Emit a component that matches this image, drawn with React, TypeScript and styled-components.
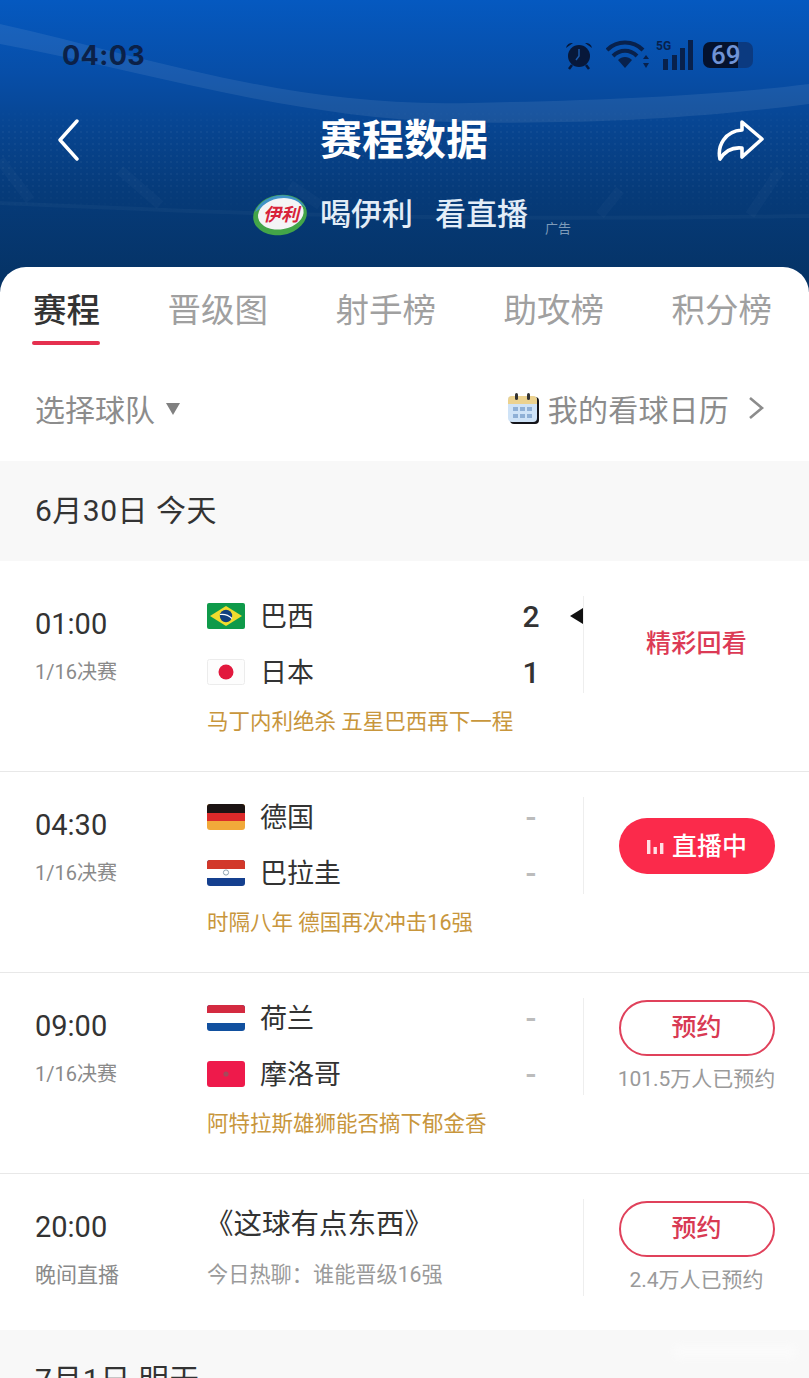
import styled, { createGlobalStyle } from 'styled-components';

const GlobalStyle = createGlobalStyle`
  html, body {
    margin: 0;
    padding: 0;
    background: #fff;
  }
  body {
    font-family: Roboto, "Noto Sans CJK SC", sans-serif;
    color: #333;
  }
`;

const Page = styled.div`
  width: 809px;
  height: 1378px;
  overflow: hidden;
  position: relative;
  background: #fff;
`;

const Header = styled.header`
  position: relative;
  height: 292px;
  box-sizing: border-box;
  padding-top: 35px;
  overflow: hidden;
  background: linear-gradient(180deg, #0559c0 0%, #074ea8 25%, #07448f 45%, #063b7a 65%, #053263 100%);
`;

const Backdrop = styled.svg`
  position: absolute;
  inset: 0;
  width: 809px;
  height: 292px;
`;

const CrowdDots = styled.div`
  position: absolute;
  left: 0;
  right: 0;
  top: 105px;
  height: 110px;
  background-image: radial-gradient(rgba(255, 255, 255, 0.04) 1px, transparent 1.6px);
  background-size: 6px 6px;
  mask-image: linear-gradient(180deg, transparent, #000 25%, #000 70%, transparent);
`;

const StatusBar = styled.div`
  position: relative;
  height: 40px;
  display: flex;
  align-items: center;
  padding: 0 56px 0 62px;
`;

const Clock = styled.span`
  font-family: Inter, Roboto, sans-serif;
  font-size: 27px;
  font-weight: 700;
  letter-spacing: 0.4px;
  color: #0b2148;
  margin-right: auto;
`;

const StatusIcons = styled.div`
  display: flex;
  align-items: center;
  gap: 6px;
`;

const Battery = styled.div`
  width: 50px;
  height: 26px;
  border-radius: 7px;
  background: linear-gradient(90deg, #04122e 0 70%, #0b3a80 70% 100%);
  color: #6f93d6;
  font-family: Roboto, sans-serif;
  font-size: 26px;
  font-weight: 500;
  line-height: 26px;
  padding-left: 8px;
  box-sizing: border-box;
`;

const NavBar = styled.div`
  position: relative;
  margin-top: 30px;
  height: 70px;
  display: flex;
  align-items: center;
  justify-content: space-between;
  padding: 0 44px 0 56px;
`;

const PageTitle = styled.h1`
  margin: 0 0 0 13px;
  padding-bottom: 8px;
  font-size: 42px;
  font-weight: 700;
  color: #fff;
`;

const AdRow = styled.div`
  position: relative;
  margin-top: 10px;
  display: flex;
  align-items: center;
  padding-left: 252px;
  height: 60px;
`;

const AdText = styled.span<{ $gap: number }>`
  margin-left: ${(p) => p.$gap}px;
  padding-bottom: 7px;
  font-size: 31px;
  font-weight: 500;
  color: #e3edf7;
`;

const AdTag = styled.span`
  font-size: 13px;
  color: #7e9bb9;
  margin: 24px 0 0 17px;
`;

const Card = styled.main`
  position: relative;
  margin-top: -25px;
  background: #fff;
  border-radius: 26px 26px 0 0;
`;

const Tabs = styled.nav`
  display: flex;
  gap: 67.5px;
  padding: 21px 0 0 33px;
  height: 78px;
  box-sizing: border-box;
  white-space: nowrap;
`;

const Tab = styled.div<{ $active?: boolean }>`
  position: relative;
  font-size: 33.5px;
  line-height: 46px;
  height: 46px;
  font-weight: ${(p) => (p.$active ? 500 : 400)};
  color: ${(p) => (p.$active ? '#333' : '#a0a0a0')};

  &::after {
    content: '';
    display: ${(p) => (p.$active ? 'block' : 'none')};
    position: absolute;
    left: -1px;
    right: 0;
    top: 53px;
    height: 4px;
    border-radius: 2px;
    background: #e5304f;
  }
`;

const FilterBar = styled.div`
  height: 116px;
  display: flex;
  align-items: center;
  justify-content: space-between;
  padding: 0 45px 0 35px;
  font-size: 30px;
  color: #8c8c8c;
`;

const FilterGroup = styled.div`
  display: flex;
  align-items: center;
  margin-top: 9px;
`;

const DownArrow = styled.i`
  width: 0;
  height: 0;
  margin: 3px 0 0 11px;
  border-left: 7px solid transparent;
  border-right: 7px solid transparent;
  border-top: 12px solid #808080;
`;

const CalendarLabel = styled.span`
  margin: 0 19px 0 9px;
  letter-spacing: 0.2px;
`;

const DateBar = styled.div`
  height: 100px;
  box-sizing: border-box;
  padding: 0 0 6px 35px;
  display: flex;
  align-items: center;
  background: #f8f8f8;
  font-size: 30px;
  letter-spacing: 0.5px;
  color: #333;
  white-space: pre;
`;

const Row = styled.section<{ $top: number; $bottom: number; $last?: boolean }>`
  display: grid;
  grid-template-columns: 172px 376px 1fr;
  padding: ${(p) => p.$top}px 0 ${(p) => p.$bottom}px 35px;
  border-bottom: ${(p) => (p.$last ? 'none' : '1px solid #e8e8e8')};
`;

const TimeCol = styled.div`
  padding-top: 16px;
`;

const Time = styled.div`
  font-size: 29px;
  line-height: 40px;
  color: #333;
`;

const Stage = styled.div`
  margin-top: 14px;
  font-size: 20px;
  line-height: 28px;
  color: #8a8a8a;
`;

const ShowStage = styled(Stage)`
  font-size: 21px;
`;

const TeamRow = styled.div`
  display: grid;
  grid-template-columns: 38px 266px 40px 32px;
  align-items: center;
  height: 56px;
`;

const TeamName = styled.span`
  padding: 0 0 4px 15px;
  font-size: 27px;
  color: #333;
`;

const Score = styled.span<{ $empty?: boolean }>`
  text-align: center;
  font-size: ${(p) => (p.$empty ? '32px' : '30px')};
  font-weight: 500;
  color: ${(p) => (p.$empty ? '#bcbcbc' : '#333')};
`;

const WinMark = styled.i`
  justify-self: end;
  width: 0;
  height: 0;
  border-top: 8px solid transparent;
  border-bottom: 8px solid transparent;
  border-right: 13px solid #111;
`;

const Headline = styled.div`
  margin-top: 8px;
  font-size: 21.5px;
  line-height: 28px;
  color: #c8963c;
`;

const ShowTitle = styled.div`
  height: 68px;
  line-height: 68px;
  font-size: 28.5px;
  margin-left: -2px;
  color: #333;
`;

const ShowNote = styled.div`
  margin-top: 2px;
  font-size: 21.2px;
  line-height: 28px;
  color: #9a9a9a;
`;

const ActionCol = styled.div`
  margin-top: 8px;
  height: 97px;
  border-left: 1px solid #eeeeee;
  display: flex;
  flex-direction: column;
  align-items: center;
  justify-content: center;
`;

const ReplayLink = styled.span`
  font-size: 25px;
  font-weight: 500;
  letter-spacing: 0.3px;
  color: #dc3a55;
  padding-bottom: 8px;
`;

const LiveButton = styled.div`
  width: 156px;
  height: 56px;
  border-radius: 28px;
  background: #fb2a4b;
  color: #fff;
  display: flex;
  align-items: center;
  justify-content: center;
  gap: 8px;
  font-size: 25px;
  font-weight: 500;
`;

const LiveLabel = styled.span`
  padding-bottom: 4px;
`;

const BookButton = styled.div`
  width: 156px;
  height: 56px;
  box-sizing: border-box;
  border: 2px solid #e0415b;
  border-radius: 28px;
  padding-bottom: 7px;
  color: #d83a53;
  display: flex;
  align-items: center;
  justify-content: center;
  font-size: 25px;
  font-weight: 500;
`;

const BookCount = styled.div`
  margin-top: 9px;
  font-size: 21px;
  line-height: 28px;
  color: #9a9a9a;
  white-space: nowrap;
`;

const Watermark = styled.div`
  position: absolute;
  right: 14px;
  bottom: 20px;
  width: 120px;
  height: 12px;
  background: #fff;
  opacity: 0.45;
  filter: blur(4px);
`;

const flagShape = { width: 38, height: 26, viewBox: '0 0 38 26' };

const Flag = ({ code }: { code: string }) => {
  if (code === 'br') {
    return (
      <svg {...flagShape}>
        <rect width="38" height="26" rx="2" fill="#0f9a4a" />
        <path d="M19 3 L35 13 L19 23 L3 13 Z" fill="#f2dc2e" />
        <circle cx="19" cy="13" r="6.2" fill="#103f7e" />
        <path d="M13 11.5 C17 11 22 12.5 25 15.5" stroke="#fff" strokeWidth="1.2" fill="none" />
      </svg>
    );
  }
  if (code === 'jp') {
    return (
      <svg {...flagShape}>
        <rect x="0.5" y="0.5" width="37" height="25" rx="2" fill="#fdfdfd" stroke="#ececec" />
        <circle cx="19" cy="13" r="7.5" fill="#e2183d" />
      </svg>
    );
  }
  if (code === 'de') {
    return (
      <svg {...flagShape}>
        <rect width="38" height="26" rx="3" fill="#f1a93a" />
        <rect y="7" width="38" height="10" fill="#dc2a2a" />
        <path d="M3 0 H35 A3 3 0 0 1 38 3 V9 H0 V3 A3 3 0 0 1 3 0 Z" fill="#1c1414" />
      </svg>
    );
  }
  if (code === 'py') {
    return (
      <svg {...flagShape}>
        <rect width="38" height="26" rx="3" fill="#15408f" />
        <rect y="8" width="38" height="10" fill="#fff" />
        <path d="M3 0 H35 A3 3 0 0 1 38 3 V9 H0 V3 A3 3 0 0 1 3 0 Z" fill="#d2382a" />
        <circle cx="19" cy="12.5" r="2.6" fill="none" stroke="#8fa3b0" strokeWidth="1" />
      </svg>
    );
  }
  if (code === 'nl') {
    return (
      <svg {...flagShape}>
        <rect width="38" height="26" rx="3" fill="#11509f" />
        <rect y="8" width="38" height="10" fill="#fff" />
        <path d="M3 0 H35 A3 3 0 0 1 38 3 V8 H0 V3 A3 3 0 0 1 3 0 Z" fill="#d42a40" />
      </svg>
    );
  }
  return (
    <svg {...flagShape}>
      <rect width="38" height="26" rx="3" fill="#ee1a4b" />
      <circle cx="19" cy="13" r="2.6" fill="#a5485a" />
    </svg>
  );
};

const AlarmIcon = () => (
  <svg width="36" height="30" viewBox="0 0 36 30">
    <circle cx="15" cy="16" r="11" fill="#07183a" />
    <path d="M2 8 A6 6 0 0 1 9 3 Z M28 8 A6 6 0 0 0 21 3 Z" fill="#07183a" />
    <path d="M8 25 L5 29 M22 25 L25 29" stroke="#07183a" strokeWidth="2.5" />
    <path d="M15 9 V16 L12 20" stroke="#1b58a8" strokeWidth="1.5" fill="none" />
  </svg>
);

const WifiIcon = () => (
  <svg width="44" height="30" viewBox="0 0 44 30">
    <path d="M1 10 C11 0 27 0 37 10" stroke="#08214c" strokeWidth="4" fill="none" />
    <path d="M7 16 C14 9 24 9 31 16" stroke="#08214c" strokeWidth="4" fill="none" />
    <path d="M19 28 L12 20 C16 16 22 16 26 20 Z" fill="#08214c" />
    <path d="M40 15 L43 19 H37 Z M40 28 L37 23 H43 Z" fill="#08214c" />
  </svg>
);

const SignalIcon = () => (
  <svg width="41" height="32" viewBox="0 0 41 32">
    <text x="0" y="11" fontSize="12" fontWeight="700" fontFamily="Roboto, sans-serif" fill="#08214c">5G</text>
    <rect x="7" y="20" width="5" height="11" fill="#08214c" />
    <rect x="16" y="16" width="5" height="15" fill="#08214c" />
    <rect x="24" y="9" width="5" height="22" fill="#08214c" />
    <rect x="32" y="1" width="5" height="30" fill="#08214c" />
  </svg>
);

const YiliLogo = () => (
  <svg width="56" height="44" viewBox="0 0 56 44">
    <g transform="rotate(-10 28 22)">
      <ellipse cx="28" cy="22" rx="27" ry="20" fill="#43a548" />
      <path d="M4 15 C12 -1 46 -4 55 20 C47 8 20 6 4 15 Z" fill="#3f93c6" />
      <ellipse cx="29" cy="21" rx="23" ry="15.5" fill="#f4f4f6" />
    </g>
    <text x="29" y="28" textAnchor="middle" fontSize="18" fontStyle="italic" fontWeight="700" fontFamily='"Noto Sans CJK SC", sans-serif' fill="#d8233a">伊利</text>
  </svg>
);

const BackIcon = () => (
  <svg width="24" height="42" viewBox="0 0 24 42">
    <path d="M21 2 L4 21 L21 40" stroke="#fff" strokeWidth="3.4" fill="none" strokeLinecap="round" strokeLinejoin="round" />
  </svg>
);

const ShareIcon = () => (
  <svg width="50" height="44" viewBox="0 0 50 44">
    <path
      d="M27 4 L47 21 L27 39 V30 C18 29 10 33 5 41 C2 28 10 13 27 12 Z"
      stroke="#fff"
      strokeWidth="3.6"
      fill="none"
      strokeLinejoin="round"
    />
  </svg>
);

const CalendarIcon = () => (
  <svg width="32" height="32" viewBox="0 0 32 32">
    <rect x="3" y="5" width="29" height="27" rx="4" fill="#14141a" />
    <rect x="1" y="4" width="29" height="26" rx="4" fill="#cfe3f7" />
    <path d="M1 12 V8 A4 4 0 0 1 5 4 H26 A4 4 0 0 1 30 8 V12 Z" fill="#ecd28f" />
    <rect x="8" y="1" width="3" height="7" rx="1.5" fill="#333" />
    <rect x="20" y="1" width="3" height="7" rx="1.5" fill="#333" />
    {[6, 13, 20].map((x) =>
      [15, 22].map((y) => <rect key={`${x}-${y}`} x={x} y={y} width="5" height="4" fill="#8fb0d6" />),
    )}
  </svg>
);

const ChevronIcon = () => (
  <svg width="16" height="24" viewBox="0 0 16 24">
    <path d="M2 2 L14 12 L2 22" stroke="#8c8c8c" strokeWidth="2.6" fill="none" />
  </svg>
);

const LiveBars = () => (
  <svg width="18" height="18" viewBox="0 0 18 18">
    <rect x="1" y="3" width="3.4" height="14" fill="#fff" opacity="0.85" />
    <rect x="7.5" y="10" width="3.4" height="7" fill="#fff" opacity="0.85" />
    <rect x="14" y="6" width="3.4" height="11" fill="#fff" opacity="0.85" />
  </svg>
);

type Match = {
  time: string;
  stage: string;
  home: { flag: string; name: string; score: string };
  away: { flag: string; name: string; score: string };
  headline: string;
  state: 'replay' | 'live' | 'book';
  booked?: string;
};

const matches: Match[] = [
  {
    time: '01:00',
    stage: '1/16决赛',
    home: { flag: 'br', name: '巴西', score: '2' },
    away: { flag: 'jp', name: '日本', score: '1' },
    headline: '马丁内利绝杀 五星巴西再下一程',
    state: 'replay',
  },
  {
    time: '04:30',
    stage: '1/16决赛',
    home: { flag: 'de', name: '德国', score: '-' },
    away: { flag: 'py', name: '巴拉圭', score: '-' },
    headline: '时隔八年 德国再次冲击16强',
    state: 'live',
  },
  {
    time: '09:00',
    stage: '1/16决赛',
    home: { flag: 'nl', name: '荷兰', score: '-' },
    away: { flag: 'ma', name: '摩洛哥', score: '-' },
    headline: '阿特拉斯雄狮能否摘下郁金香',
    state: 'book',
    booked: '101.5万人已预约',
  },
];

const tabs = ['赛程', '晋级图', '射手榜', '助攻榜', '积分榜'];

function Action({ match }: { match: Match }) {
  if (match.state === 'replay') return <ReplayLink>精彩回看</ReplayLink>;
  if (match.state === 'live') {
    return (
      <LiveButton>
        <LiveBars />
        <LiveLabel>直播中</LiveLabel>
      </LiveButton>
    );
  }
  return (
    <>
      <BookButton>预约</BookButton>
      <BookCount>{match.booked}</BookCount>
    </>
  );
}

export default function App() {
  return (
    <Page>
      <GlobalStyle />
      <Header>
        <CrowdDots />
        <Backdrop viewBox="0 0 809 292">
          <path
            d="M0 24 C140 55 290 108 470 103 C610 100 720 95 809 84 L809 104 C700 118 590 125 450 122 C290 118 140 70 0 44 Z"
            fill="#ffffff"
            opacity="0.08"
          />
          <path d="M0 160 L30 200 M120 170 L160 205 M290 185 L320 205 M620 190 L600 215 M780 170 L750 215" stroke="#ffffff" strokeWidth="10" opacity="0.02" />
          <path d="M0 203 C200 212 400 222 809 216" stroke="#ffffff" strokeWidth="4" opacity="0.03" fill="none" />
        </Backdrop>
        <StatusBar>
          <Clock>04:03</Clock>
          <StatusIcons>
            <AlarmIcon />
            <WifiIcon />
            <SignalIcon />
            <Battery>69</Battery>
          </StatusIcons>
        </StatusBar>
        <NavBar>
          <BackIcon />
          <PageTitle>赛程数据</PageTitle>
          <ShareIcon />
        </NavBar>
        <AdRow>
          <YiliLogo />
          <AdText $gap={12}>喝伊利</AdText>
          <AdText $gap={22}>看直播</AdText>
          <AdTag>广告</AdTag>
        </AdRow>
      </Header>
      <Card>
        <Tabs>
          {tabs.map((tab, i) => (
            <Tab key={tab} $active={i === 0}>
              {tab}
            </Tab>
          ))}
        </Tabs>
        <FilterBar>
          <FilterGroup>
            选择球队
            <DownArrow />
          </FilterGroup>
          <FilterGroup>
            <CalendarIcon />
            <CalendarLabel>我的看球日历</CalendarLabel>
            <ChevronIcon />
          </FilterGroup>
        </FilterBar>
        <DateBar>6月30日 今天</DateBar>
        {matches.map((match, i) => (
          <Row key={match.time} $top={i === 0 ? 27 : 17} $bottom={35}>
            <TimeCol>
              <Time>{match.time}</Time>
              <Stage>{match.stage}</Stage>
            </TimeCol>
            <div>
              {[match.home, match.away].map((team, t) => (
                <TeamRow key={team.name}>
                  <Flag code={team.flag} />
                  <TeamName>{team.name}</TeamName>
                  <Score $empty={team.score === '-'}>{team.score}</Score>
                  {match.state === 'replay' && t === 0 && <WinMark />}
                </TeamRow>
              ))}
              <Headline>{match.headline}</Headline>
            </div>
            <ActionCol>
              <Action match={match} />
            </ActionCol>
          </Row>
        ))}
        <Row $top={17} $bottom={34} $last>
          <TimeCol>
            <Time>20:00</Time>
            <ShowStage>晚间直播</ShowStage>
          </TimeCol>
          <div>
            <ShowTitle>《这球有点东西》</ShowTitle>
            <ShowNote>今日热聊：谁能晋级16强</ShowNote>
          </div>
          <ActionCol>
            <BookButton>预约</BookButton>
            <BookCount>2.4万人已预约</BookCount>
          </ActionCol>
        </Row>
        <DateBar>7月1日 明天</DateBar>
      </Card>
      <Watermark />
    </Page>
  );
}
